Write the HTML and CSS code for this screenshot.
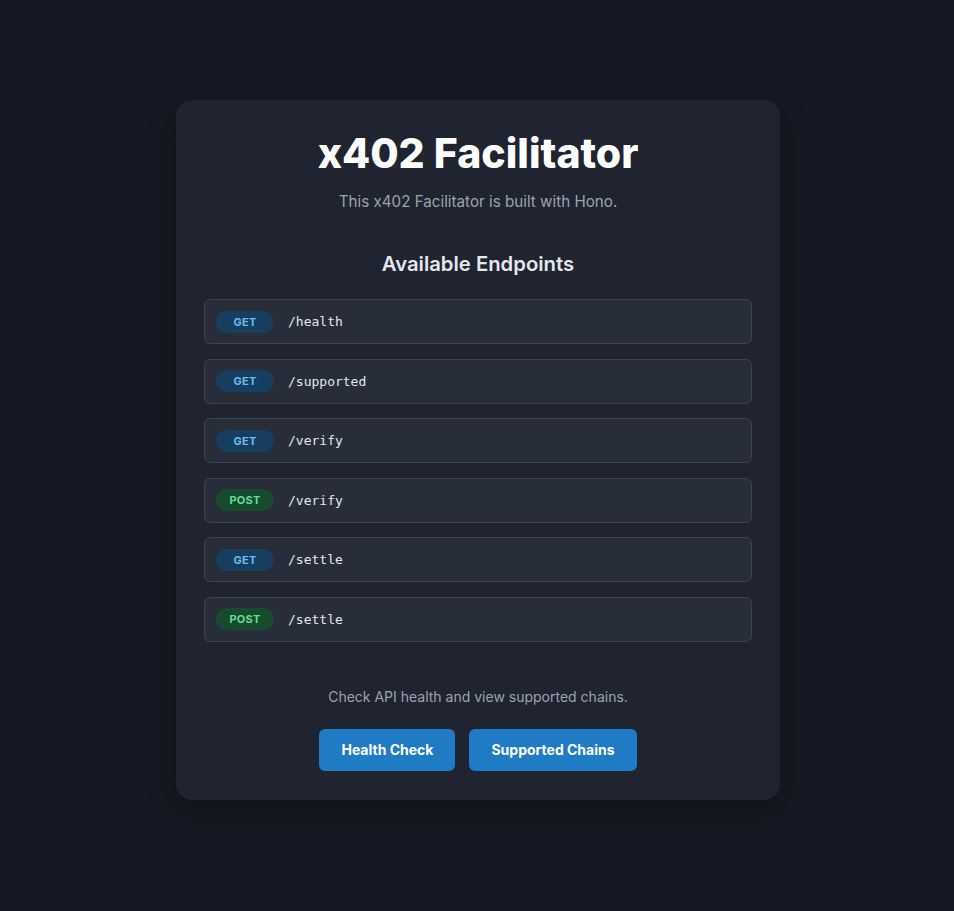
FILE: index.html
```html
<!DOCTYPE html>
<html lang="en">
<head>
  <meta charset="UTF-8">
  <title>x402 Facilitator</title>
  <link rel="stylesheet" href="styles.css">
</head>
<body>
<div class="container">
  <h1>x402 Facilitator</h1>
  <p class="subtitle">This x402 Facilitator is built with Hono.</p>

  <h2>Available Endpoints</h2>
  <ul class="endpoints">
    <li class="endpoint"><span class="method get">GET</span><code>/health</code></li>
    <li class="endpoint"><span class="method get">GET</span><code>/supported</code></li>
    <li class="endpoint"><span class="method get">GET</span><code>/verify</code></li>
    <li class="endpoint"><span class="method post">POST</span><code>/verify</code></li>
    <li class="endpoint"><span class="method get">GET</span><code>/settle</code></li>
    <li class="endpoint"><span class="method post">POST</span><code>/settle</code></li>
  </ul>

  <p class="hint">Check API health and view supported chains.</p>
  <div class="actions">
    <a class="btn" href="/health">Health Check</a>
    <a class="btn" href="/supported">Supported Chains</a>
  </div>
</div>
</body>
</html>
```

FILE: styles.css
```css
html, body { margin: 0; padding: 0; background: #151923; font-family: 'Inter', Arial, sans-serif; color: #e5e7eb; }
body { min-height: 100vh; box-sizing: border-box; padding: 100px 20px 100px 22px; }
.container { background: #1f2430; width: 548px; margin: 0 auto; padding: 28px 28px 29px 28px; border-radius: 16px; box-shadow: 0 10px 30px rgba(0, 0, 0, 0.25); text-align: center; }
h1 { margin: 1px 0 0; font-size: 41px; font-weight: 800; color: #fff; line-height: 48px; }
.subtitle { margin: 15px 0 0; font-size: 15.2px; color: #9ca3af; }
h2 { margin: 40px 0 0; font-size: 20.3px; font-weight: 600; color: #e5e7eb; }
.endpoints { list-style: none; margin: 23px 0 0; padding: 0; display: flex; flex-direction: column; gap: 14.6px; text-align: left; }
.endpoint { display: flex; align-items: center; gap: 14px; height: 43px; padding: 0 11px; background: #282d3a; border: 1px solid #3c4251; border-radius: 6px; }
.method { display: inline-block; width: 58px; height: 22px; line-height: 22px; border-radius: 11px; font-size: 11px; font-weight: 700; text-align: center; letter-spacing: 0.02em; }
.method.get { background: #173e5f; color: #6cbcee; }
.method.post { background: #174a2f; color: #62de90; }
.endpoint code { font-family: 'DejaVu Sans Mono', monospace; font-size: 13px; color: #e5e7eb; }
.hint { margin: 46px 0 0; font-size: 14px; color: #9ca3af; }
.actions { display: flex; justify-content: center; gap: 14px; margin-top: 24px; }
.btn { display: inline-block; padding: 0 22px; height: 42px; line-height: 42px; background: #1f7bc4; color: #fff; border-radius: 6px; font-size: 14px; font-weight: 700; text-decoration: none; }
```
